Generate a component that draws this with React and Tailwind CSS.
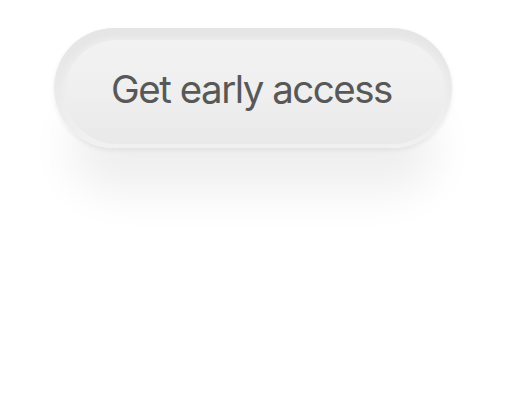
export default function App() {
  return (
    <div className="w-[506px] h-[408px] bg-white pt-[28px] pl-[54px]" style={{ fontFamily: "Inter, 'Liberation Sans', sans-serif" }}>
      <div className="w-[398px] h-[120px] rounded-full bg-gradient-to-b from-[#e5e5e5] via-[#eaeaea] to-[#f1f1f1] pt-[12px] pl-[11px] pr-[7px] pb-[4px] shadow-[0_60px_45px_-16px_rgba(0,0,0,0.065),0_2px_5px_rgba(0,0,0,0.07)]">
        <div className="w-full h-full rounded-full bg-gradient-to-b from-[#f2f2f2] via-[#efefef] to-[#e9e9e9] shadow-[0_0_6px_2px_rgba(240,240,240,0.9)] flex items-center justify-center">
          <span className="text-[38.5px] text-[#585858] tracking-[-1.5px] leading-none -mt-[6px] -ml-[7px]">Get early access</span>
        </div>
      </div>
    </div>
  );
}
